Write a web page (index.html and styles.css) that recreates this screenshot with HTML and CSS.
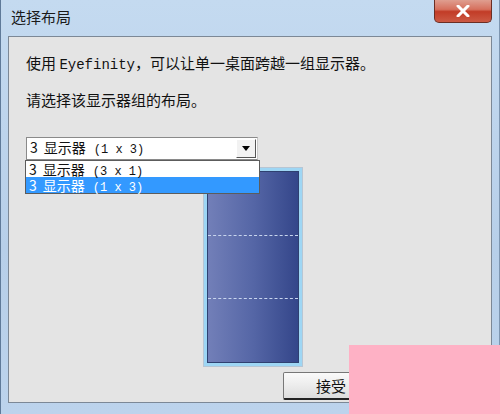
FILE: index.html
```html
<!DOCTYPE html>
<html lang="zh-CN">
  <head>
    <meta charset="UTF-8" />
    <title>选择布局</title>
    <link rel="stylesheet" href="styles.css">
  </head>
  <body>
    <div class="window">
      <header class="titlebar">
        <span class="title">选择布局</span>
        <button class="close" aria-label="关闭">
          <svg width="14" height="12" viewBox="0 0 14 12">
            <path d="M2 1 L12 11 M12 1 L2 11" stroke="#fff" stroke-width="3" stroke-linecap="round" />
          </svg>
        </button>
      </header>

      <main class="client">
        <p class="line">使用 <span class="latin">Eyefinity</span>，可以让单一桌面跨越一组显示器。</p>
        <p class="line second">请选择该显示器组的布局。</p>

        <div class="combo">
          <div class="combo-value"><span class="num">3</span><span class="cjk">显示器</span><span class="latin small">(1 x 3)</span></div>
          <div class="combo-btn"><span class="arrow"></span></div>
          <ul class="combo-list">
            <li><span class="num">3</span><span class="cjk">显示器</span><span class="latin small">(3 x 1)</span></li>
            <li class="selected"><span class="num">3</span><span class="cjk">显示器</span><span class="latin small">(1 x 3)</span></li>
          </ul>
        </div>

        <div class="preview">
          <div class="screens">
            <div class="screen"></div>
            <div class="screen"></div>
            <div class="screen"></div>
          </div>
        </div>

        <div class="actions">
          <button class="accept">接受</button>
        </div>
      </main>
    </div>
    <div class="watermark"></div>
  </body>
</html>
```

FILE: styles.css
```css
* {
  margin: 0;
  padding: 0;
  box-sizing: border-box;
}

body {
  width: 500px;
  height: 414px;
  overflow: hidden;
  position: relative;
  font-family: "Noto Sans CJK SC", sans-serif;
  color: #111;
  background: #bcd3eb;
}

.window {
  height: 414px;
  background: linear-gradient(180deg, #c4daf0 0%, #b7cfe9 60%, #bcd3ec 100%);
  border-left: 1px solid #5f7a99;
  border-right: 1px solid #7d95b0;
  padding: 0 7px 0 7px;
  display: flex;
  flex-direction: column;
}

.titlebar {
  height: 36px;
  display: flex;
  justify-content: space-between;
  align-items: flex-start;
}

.title {
  font-size: 15px;
  line-height: 20px;
  margin: 7px 0 0 3px;
  color: #1a1a1a;
}

.close {
  width: 58px;
  height: 24px;
  margin-top: -1px;
  border: 1px solid #6b2e24;
  border-top: none;
  border-radius: 0 0 5px 5px;
  background: linear-gradient(180deg, #e0a395 0%, #d6705d 45%, #c23c27 55%, #cc5a44 100%);
  display: flex;
  align-items: center;
  justify-content: center;
}

.client {
  height: 367px;
  background: #e4e4e4;
  border: 1px solid #7c8896;
  padding: 16px 0 0 17px;
  display: flex;
  flex-direction: column;
}

.line {
  font-size: 15px;
  line-height: 20px;
  white-space: nowrap;
}

.line.second {
  margin-top: 15px;
}

.latin {
  font-family: "Liberation Mono", monospace;
  font-size: 14px;
}

.latin.small {
  font-size: 12px;
}

.num {
  margin-right: 6px;
}

.cjk {
  margin-right: 8px;
}

/* Combo box */
.combo {
  position: relative;
  width: 232px;
  height: 23px;
  margin-top: 27px;
  background: #fff;
  border: 1px solid #8a8a8a;
  border-right-color: #c8c8c8;
  display: flex;
  align-items: center;
  font-size: 14px;
}

.combo-value {
  flex: 1;
  padding-left: 3px;
  line-height: 18px;
  white-space: nowrap;
}

.combo-btn {
  width: 20px;
  height: 19px;
  margin-right: 1px;
  background: #f2f2f2;
  border: 1px solid #fff;
  border-right-color: #555;
  border-bottom-color: #555;
  display: flex;
  align-items: center;
  justify-content: center;
}

.arrow {
  width: 0;
  height: 0;
  border-left: 4px solid transparent;
  border-right: 4px solid transparent;
  border-top: 5px solid #000;
}

.combo-list {
  position: absolute;
  left: -2px;
  top: 22px;
  width: 235px;
  list-style: none;
  background: #fff;
  border: 1px solid #5c5c5c;
  z-index: 2;
}

.combo-list li {
  height: 16px;
  line-height: 16px;
  padding-left: 3px;
  font-size: 14px;
  white-space: nowrap;
}

.combo-list li.selected {
  background: #3399ff;
  color: #fff;
}

/* Layout preview */
.preview {
  width: 100px;
  height: 200px;
  margin: 7px 0 0 177px;
  border: 1px solid #b7c6d4;
  background: #9ed6f4;
  padding: 3px;
}

.screens {
  height: 100%;
  border: 1px solid #2f4070;
  background: linear-gradient(90deg, #727fb8 0%, #5566a6 50%, #34468a 100%);
  display: flex;
  flex-direction: column;
}

.screen {
  flex: 1;
}

.screen + .screen {
  border-top: 1px dashed #c9d6ee;
}

.actions {
  margin: 5px 0 0 257px;
}

.accept {
  width: 96px;
  height: 28px;
  font-family: "Noto Sans CJK SC", sans-serif;
  font-size: 15px;
  color: #111;
  border: 1px solid #777;
  border-bottom: 2px solid #222;
  border-radius: 2px;
  background: linear-gradient(180deg, #fafafa 0%, #ececec 50%, #dcdcdc 100%);
}

.watermark {
  position: absolute;
  left: 349px;
  top: 345px;
  width: 151px;
  height: 69px;
  background: #feb1c5;
}
```
